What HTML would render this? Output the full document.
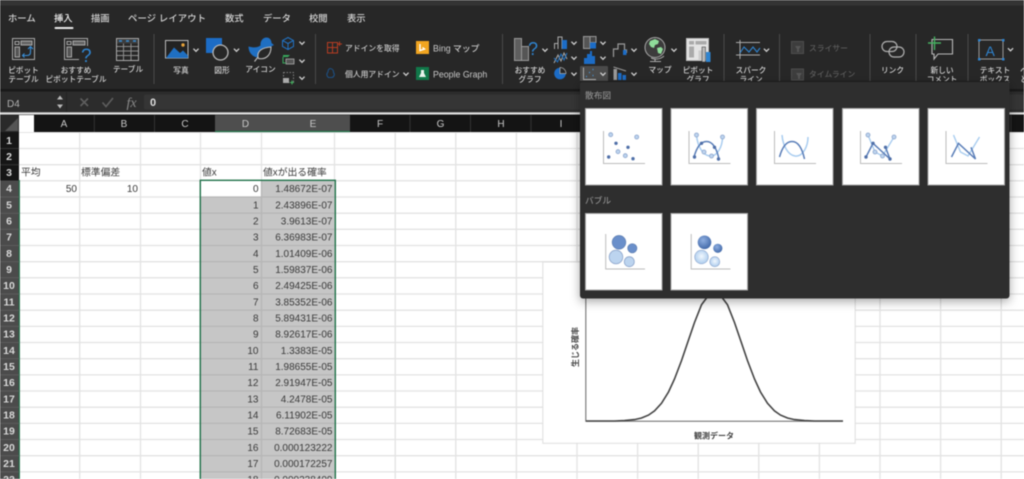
<!DOCTYPE html>
<html lang="ja">
<head>
<meta charset="utf-8">
<title>Excel</title>
<style>
html,body{margin:0;padding:0;width:1024px;height:479px;overflow:hidden;background:#fff}
svg{display:block;filter:blur(.4px)}
text{font-family:"Liberation Sans","Noto Sans CJK JP",sans-serif}
.tab{font-size:9.300px;fill:#d4d4d4;font-weight:500}
.rb{font-size:7.700px;fill:#d2d2d2;text-anchor:middle;font-weight:500}
.rl{font-size:7.800px;fill:#c8c8c8;font-weight:500}
.rle{font-size:8.800px;fill:#c8c8c8;font-weight:500}
.dim{font-size:7.800px;fill:#5c5c5c;font-weight:500}
.h{font-size:10px;fill:#c8c8c8;text-anchor:middle}
.rh{font-size:10.500px;fill:#d8d8d8;text-anchor:middle;font-weight:700}
.n{font-size:10px;fill:#3a3a3a;text-anchor:end}
.t{font-size:9.800px;fill:#3a3a3a}
.sec{font-size:8.700px;fill:#8b8b8b;font-weight:500}
.ax{font-size:8px;fill:#444;font-weight:700}
.g{stroke:#e3e3e3;stroke-width:1.300}
.ch{fill:none;stroke:#d0d0d0;stroke-width:1.300}
.sep{stroke:#4a4a4a;stroke-width:1}
.l{fill:#bcd3ee;stroke:#8ea6cc;stroke-width:.8}
.d{fill:#4f6fa8}
</style>
</head>
<body>
<svg width="1024" height="479" viewBox="0 0 1024 479" xmlns="http://www.w3.org/2000/svg">
<defs>
<path id="c" class="ch" d="M-2.600 -1.300 L0 1.300 L2.600 -1.300"/>
<path id="axes" d="M18.500 23 V55.500 H60" fill="none" stroke="#bdbdbd" stroke-width="1"/>
<path id="axesb" d="M20.700 21 V56 H60" fill="none" stroke="#bdbdbd" stroke-width="1"/>
<radialGradient id="gd" cx=".4" cy=".35" r=".7"><stop offset="0" stop-color="#8eaee0"/><stop offset="1" stop-color="#3f66a6"/></radialGradient>
<radialGradient id="gl" cx=".5" cy=".45" r=".6"><stop offset="0" stop-color="#f2f8fe"/><stop offset="1" stop-color="#a6c8ec"/></radialGradient>
<filter id="sh" x="-10%" y="-10%" width="120%" height="125%"><feDropShadow dx="0" dy="3" stdDeviation="5" flood-color="#000" flood-opacity=".35"/></filter>
</defs>

<!-- sheet -->
<rect x="0" y="132" width="1024" height="347" fill="#fff"/>
<g class="g">
<path d="M0 132.300H1024M0 148.500H1024M0 164.700H1024M0 180.800H1024M0 197H1024M0 213.200H1024M0 229.300H1024M0 245.500H1024M0 261.700H1024M0 277.800H1024M0 294H1024M0 310.200H1024M0 326.400H1024M0 342.500H1024M0 358.700H1024M0 374.900H1024M0 391H1024M0 407.200H1024M0 423.400H1024M0 439.500H1024M0 455.700H1024M0 471.900H1024"/>
<path d="M79.700 132V479M140.500 132V479M200.500 132V479M261.500 132V479M334.500 132V479M395.200 132V479M455.800 132V479M516.400 132V479M577 132V479M637.600 132V479M698.200 132V479M758.800 132V479M819.400 132V479M880 132V479M940.600 132V479M1001.200 132V479"/>
</g>

<!-- selection -->
<rect x="201" y="181" width="133.500" height="298" fill="#c6c6c6"/>
<rect x="201" y="181" width="60" height="15.500" fill="#fff"/>
<path d="M201 197H334.500M201 213.200H334.500M201 229.300H334.500M201 245.500H334.500M201 261.700H334.500M201 277.800H334.500M201 294H334.500M201 310.200H334.500M201 326.400H334.500M201 342.500H334.500M201 358.700H334.500M201 374.900H334.500M201 391H334.500M201 407.200H334.500M201 423.400H334.500M201 439.500H334.500M201 455.700H334.500M201 471.900H334.500" stroke="#b6b6b6" stroke-width="1.300"/>
<path d="M261.500 181V479" stroke="#b6b6b6" stroke-width="1.300"/>
<path d="M200.300 479V180.300H335.300V479" fill="none" stroke="#1f7048" stroke-width="1.400"/>

<!-- row headers -->
<rect x="0" y="132" width="19" height="48.500" fill="#161616"/>
<rect x="0" y="180.500" width="19" height="299" fill="#4b4b4b"/>
<path d="M19.300 180V479" stroke="#1f7048" stroke-width="1.200"/>
<path d="M0 148.500H19M0 164.700H19" stroke="#333"/>
<path d="M0 197H19M0 213.200H19M0 229.300H19M0 245.500H19M0 261.700H19M0 277.800H19M0 294H19M0 310.200H19M0 326.400H19M0 342.500H19M0 358.700H19M0 374.900H19M0 391H19M0 407.200H19M0 423.400H19M0 439.500H19M0 455.700H19M0 471.900H19" stroke="#5d5d5d"/>
<g>
<text class="rh" x="9" y="144">1</text><text class="rh" x="9" y="160">2</text><text class="rh" x="9" y="176">3</text>
<text class="rh" x="9" y="192">4</text><text class="rh" x="9" y="208.500">5</text><text class="rh" x="9" y="224.500">6</text>
<text class="rh" x="9" y="240.500">7</text><text class="rh" x="9" y="257">8</text><text class="rh" x="9" y="273">9</text>
<text class="rh" x="9" y="289">10</text><text class="rh" x="9" y="305.500">11</text><text class="rh" x="9" y="321.500">12</text>
<text class="rh" x="9" y="337.500">13</text><text class="rh" x="9" y="354">14</text><text class="rh" x="9" y="370">15</text>
<text class="rh" x="9" y="386">16</text><text class="rh" x="9" y="402.500">17</text><text class="rh" x="9" y="418.500">18</text>
<text class="rh" x="9" y="434.500">19</text><text class="rh" x="9" y="451">20</text><text class="rh" x="9" y="467">21</text>
<text class="rh" x="9" y="483">22</text>
</g>

<!-- cells -->
<text class="t" x="21" y="175.500">平均</text>
<text class="t" x="81" y="175.500">標準偏差</text>
<text class="t" x="202" y="175.500">値x</text>
<text class="t" x="263" y="175.500">値xが出る確率</text>
<text class="n" x="77" y="192">50</text>
<text class="n" x="138" y="192">10</text>
<g>
<text class="n" x="258.500" y="192">0</text><text class="n" x="332.500" y="192">1.48672E-07</text>
<text class="n" x="258.500" y="208.500">1</text><text class="n" x="332.500" y="208.500">2.43896E-07</text>
<text class="n" x="258.500" y="224.500">2</text><text class="n" x="332.500" y="224.500">3.9613E-07</text>
<text class="n" x="258.500" y="240.500">3</text><text class="n" x="332.500" y="240.500">6.36983E-07</text>
<text class="n" x="258.500" y="257">4</text><text class="n" x="332.500" y="257">1.01409E-06</text>
<text class="n" x="258.500" y="273">5</text><text class="n" x="332.500" y="273">1.59837E-06</text>
<text class="n" x="258.500" y="289">6</text><text class="n" x="332.500" y="289">2.49425E-06</text>
<text class="n" x="258.500" y="305.500">7</text><text class="n" x="332.500" y="305.500">3.85352E-06</text>
<text class="n" x="258.500" y="321.500">8</text><text class="n" x="332.500" y="321.500">5.89431E-06</text>
<text class="n" x="258.500" y="337.500">9</text><text class="n" x="332.500" y="337.500">8.92617E-06</text>
<text class="n" x="258.500" y="354">10</text><text class="n" x="332.500" y="354">1.3383E-05</text>
<text class="n" x="258.500" y="370">11</text><text class="n" x="332.500" y="370">1.98655E-05</text>
<text class="n" x="258.500" y="386">12</text><text class="n" x="332.500" y="386">2.91947E-05</text>
<text class="n" x="258.500" y="402.500">13</text><text class="n" x="332.500" y="402.500">4.2478E-05</text>
<text class="n" x="258.500" y="418.500">14</text><text class="n" x="332.500" y="418.500">6.11902E-05</text>
<text class="n" x="258.500" y="434.500">15</text><text class="n" x="332.500" y="434.500">8.72683E-05</text>
<text class="n" x="258.500" y="451">16</text><text class="n" x="332.500" y="451">0.000123222</text>
<text class="n" x="258.500" y="467">17</text><text class="n" x="332.500" y="467">0.000172257</text>
<text class="n" x="258.500" y="483">18</text><text class="n" x="332.500" y="483">0.000238409</text>
</g>

<!-- chart -->
<rect x="542.800" y="262" width="312.400" height="181.300" fill="#fff" stroke="#dedede" stroke-width="1"/>
<path d="M585.800 262V421.300H843" fill="none" stroke="#666" stroke-width="1"/>
<polyline fill="none" stroke="#444" stroke-width="1.600" points="586,421 614.500,421 624.500,420.600 634.500,419.600 641.500,418 648.500,415.100 654.500,410.900 661.500,403.300 668.500,392 674.500,379 681.500,360.600 688,341.500 694.500,322.500 701.500,304.800 708,296 714.500,290 721,296 727.500,304.800 734.500,322.500 741,341.500 747.500,360.600 754.500,379 760.500,392 767.500,403.300 774.500,410.900 780.500,415.100 787.500,418 794.500,419.600 804.500,420.600 814.500,421 843,421"/>
<text class="ax" x="714" y="438.500" text-anchor="middle">観測データ</text>
<text class="ax" transform="translate(578,347) rotate(-90)" text-anchor="middle">生じる確率</text>

<!-- column header -->
<rect x="0" y="114.500" width="1024" height="17.500" fill="#141414"/>
<rect x="19" y="115" width="15" height="17" fill="#fff"/>
<rect x="0" y="114.500" width="19" height="17.500" fill="#2a2a2a"/>
<path d="M5 131L18 118V131Z" fill="#555"/>
<rect x="215" y="115" width="135" height="17" fill="#4e4e4e"/>
<path d="M215 131.500H350" stroke="#1f7048" stroke-width="1.200"/>
<path d="M94.300 115V132M154.500 115V132M410 115V132M470.500 115V132M531 115V132M591 115V132M1011 115V132" stroke="#333"/>
<text class="h" x="64" y="127">A</text><text class="h" x="124" y="127">B</text><text class="h" x="185" y="127">C</text>
<text class="h" x="245.500" y="127">D</text><text class="h" x="313" y="127">E</text><text class="h" x="380" y="127">F</text>
<text class="h" x="440.500" y="127">G</text><text class="h" x="501" y="127">H</text><text class="h" x="561" y="127">I</text>

<!-- formula bar -->
<rect x="0" y="89" width="1024" height="25" fill="#2c2c2c"/>
<rect x="0" y="89" width="1024" height="2.500" fill="#191919"/>
<rect x="0" y="112.300" width="1024" height="1.800" fill="#dcdcdc"/>
<rect x="144" y="94.500" width="880" height="15" rx="2" fill="#353535"/>
<rect x="66" y="92" width="1" height="20" fill="#232323"/>
<text x="7" y="107" font-size="10" fill="#b0b0b0">D4</text>
<path d="M57 99.500L60 95.500L63 99.500ZM57 104.500L60 108.500L63 104.500Z" fill="#b8b8b8"/>
<path d="M80.500 98.500L88 106M88 98.500L80.500 106" stroke="#5e5e5e" stroke-width="1.600" fill="none"/>
<path d="M102.500 102.500L106 106.500L113 98" stroke="#5e5e5e" stroke-width="1.600" fill="none"/>
<text x="126.500" y="107" style="font-family:'Liberation Serif',serif" font-style="italic" font-size="14" fill="#8a8a8a">fx</text>
<text x="150" y="106" font-size="11" font-weight="700" fill="#dedede">0</text>

<!-- ribbon -->
<rect x="0" y="0" width="1024" height="89" fill="#272727"/>
<rect x="0" y="0" width="1024" height="5.500" fill="#343434"/>
<text class="tab" x="8" y="21.500">ホーム</text>
<text class="tab" x="54" y="21.500" style="fill:#f0f0f0">挿入</text>
<rect x="54.500" y="27" width="19" height="2" rx="1" fill="#e8e8e8"/>
<text class="tab" x="91" y="21.500">描画</text>
<text class="tab" x="128" y="21.500" textLength="78">ページ レイアウト</text>
<text class="tab" x="225" y="21.500">数式</text>
<text class="tab" x="263" y="21.500">データ</text>
<text class="tab" x="309" y="21.500">校閲</text>
<text class="tab" x="347" y="21.500">表示</text>

<path class="sep" d="M154 34V84M315.500 34V84M502.500 34V84M724 34V81M779.500 34V81M870 34V81M916 34V81M968 34V81"/>

<!-- pivot -->
<g fill="none" stroke="#a8a8a8" stroke-width="1">
<rect x="12.500" y="38.500" width="22" height="21"/><path d="M15 41.500h4v3h-4z"/><rect x="21" y="41" width="11" height="4" fill="#666"/><rect x="15" y="47" width="4.500" height="10" fill="#555"/>
<rect x="64.500" y="38.500" width="23" height="21"/><path d="M67 41.500h4v3h-4z"/><rect x="73" y="41" width="12" height="4" fill="#666"/><rect x="67" y="47" width="4.500" height="10" fill="#555"/>
</g>
<path d="M22.500 55.500h4.500q3.500 0 3.500-3.500v-5M28 49l2.500-2.500l2.500 2.500M24.500 53.500l-2 2l2 2" fill="none" stroke="#3a8fd8" stroke-width="1.100"/>
<rect x="79" y="46" width="11" height="16" fill="#272727"/>
<text x="81" y="62" font-size="19" fill="#2f84d0">?</text>
<text class="rb" x="23.500" y="73">ピボット</text><text class="rb" x="23.500" y="82">テーブル</text>
<text class="rb" x="76" y="73">おすすめ</text><text class="rb" x="76" y="82">ピボットテーブル</text>

<!-- table -->
<rect x="116.500" y="38.500" width="22" height="22" fill="none" stroke="#aaa"/>
<rect x="117" y="39" width="21" height="4.500" fill="#3d3d3d"/>
<path d="M117 46.500H138M117 51H138M117 55.500H138M123.500 43.500V60M131 43.500V60" stroke="#8e8e8e" fill="none"/>
<path d="M119 41h3M126 41h3M133 41h3" stroke="#3a8fd8" stroke-width="1.500"/>
<text class="rb" x="128" y="72">テーブル</text>

<!-- photo -->
<rect x="165.500" y="40.500" width="22.500" height="17.500" fill="#222" stroke="#bbb"/>
<path d="M166 58L174 47.500L180 53L183 50.500L188 55.500V58Z" fill="#1f6fc2"/>
<circle cx="183" cy="45" r="1.700" fill="#e8a33a"/>
<use href="#c" x="196" y="50"/>
<text class="rb" x="181" y="73">写真</text>

<!-- shape -->
<rect x="206" y="38" width="16" height="15" fill="#1c6cc6"/>
<circle cx="220.500" cy="52.500" r="7.500" fill="#272727" stroke="#b8b8b8" stroke-width="1.300"/>
<use href="#c" x="236.500" y="50"/>
<text class="rb" x="222" y="73">図形</text>

<!-- icons -->
<path d="M248.500 46.500C254 48 258 47.500 260.500 45.500C260 41 263 37.500 266.500 37.500C270 37.500 271.500 40.500 271.500 43L274 45L271 46.500C270 48 269 48.500 268 49.500C262 51 260 57 258 57.500C252 57 248.500 52 248.500 46.500Z" fill="#1f6fc2"/>
<path d="M254.500 61.500L258 57M258 57C257 51 262 47.500 271 47C271 54 267 60 258.500 58.500Z" fill="#272727" stroke="#bcbcbc" stroke-width="1.100"/>
<text class="rb" x="260.500" y="72">アイコン</text>

<path d="M288 37.500L293.500 40.500V46.500L288 49.500L282.500 46.500V40.500ZM282.500 40.500L288 43.500L293.500 40.500M288 43.500V49.500" fill="none" stroke="#2273c4" stroke-width="1"/>
<use href="#c" x="302" y="43"/>
<path d="M283 57h5l2-2h-7z" fill="#39a85c"/><rect x="286" y="59" width="8" height="5" fill="#555" stroke="#bbb" stroke-width=".7"/><path d="M283 57v6h3" stroke="#39a85c" fill="none"/>
<use href="#c" x="302" y="61"/>
<rect x="283.500" y="72.500" width="10" height="10" fill="none" stroke="#999" stroke-width=".8" stroke-dasharray="1.500 1.500"/>
<rect x="283" y="78" width="6" height="5" fill="#aaa"/><path d="M290 82.500h4M292 80.500v4" stroke="#45b060" stroke-width="1"/>
<use href="#c" x="302" y="78"/>

<!-- add-ins -->
<path d="M327.500 42.500H337.500V53H327.500ZM327.500 47.500H337.500M332.500 42.500V53M337.500 44H342M339.500 41.500V46" fill="none" stroke="#b53c22" stroke-width="1"/>
<text class="rl" x="345" y="51">アドインを取得</text>
<path d="M330 68.500a3.500 3.500 0 0 1 3.500 4a3 3 0 0 1-2 5h-3a3.500 3.500 0 0 1-.5-5.500a3.500 3.500 0 0 1 2-3.500z" fill="none" stroke="#1d4f82" stroke-width="1.100"/>
<text class="rl" x="345" y="77">個人用アドイン</text>
<use href="#c" x="406" y="74"/>
<rect x="416" y="41" width="13" height="13" fill="#f1a520"/>
<path d="M420 44v6.500l4.500-1.500-2-1.500" fill="none" stroke="#fff" stroke-width="1.400"/>
<text class="rle" x="433" y="51.500">Bing マップ</text>
<rect x="416" y="67" width="13" height="13" fill="#11784a"/>
<path d="M421 70h3v3l2 4h-7l2-4z" fill="#e8f3ec"/>
<text class="rle" x="433" y="77.500">People Graph</text>

<!-- charts -->
<rect x="514.500" y="38.500" width="7" height="22" fill="#5e5e5e" stroke="#999"/>
<rect x="521.500" y="46.500" width="7" height="14" fill="#555" stroke="#999"/>
<text x="528" y="55" font-size="18" fill="#2f84d0">?</text>
<use href="#c" x="545" y="50"/>
<text class="rb" x="530" y="73">おすすめ</text><text class="rb" x="530" y="82">グラフ</text>

<path d="M554.500 49V43.500H558V49M558 49V37H562V49" fill="none" stroke="#aaa"/><rect x="562" y="40" width="5" height="9" fill="#1c6cc6"/>
<use href="#c" x="574" y="43"/>
<path d="M554 63L558 55L561 61L564 53L567 59" fill="none" stroke="#aaa"/><path d="M554 58L557.500 62L561 54L564 60L567 53" fill="none" stroke="#2273c4"/>
<use href="#c" x="574" y="58"/>
<circle cx="560" cy="73.500" r="5.800" fill="#1c6cc6"/><path d="M560 73.500V67.500A6 6 0 0 1 566 73.500Z" fill="#272727" stroke="#aaa" stroke-width=".8"/>
<use href="#c" x="574" y="74"/>
<rect x="583.500" y="36.500" width="6.500" height="12" fill="#555" stroke="#999"/><rect x="590" y="36.500" width="6" height="6" fill="#444" stroke="#999"/><rect x="590" y="42.500" width="6" height="6" fill="#1c6cc6"/>
<use href="#c" x="603" y="43"/>
<path d="M584 64V58h3v6zM587 64V54h3v10zM590 64V51h2v13zM592 64V56h3v8z" fill="#1c6cc6"/>
<use href="#c" x="603" y="58"/>
<rect x="580" y="66" width="28" height="15.500" rx="1" fill="#4b4b4b"/>
<path d="M583.500 67.500V79.500H596" fill="none" stroke="#bbb" stroke-width=".9"/>
<path d="M586 76.500h1M589 72.500h1M592.500 69.500h1M592.500 75.500h1" stroke="#4a9ae0" stroke-width="1.200"/>
<use href="#c" x="603" y="74"/>
<path d="M613.500 57V49H618V44H624.500V50H626.500V53" fill="none" stroke="#9a9a9a" stroke-width="1.200"/><rect x="623" y="50" width="3.500" height="5" fill="#1c6cc6"/>
<use href="#c" x="634" y="50"/>
<path d="M613.500 67L626 71" fill="none" stroke="#999"/><rect x="613.500" y="69" width="3.500" height="11" fill="#999"/><rect x="618" y="73" width="3.500" height="7" fill="#1c6cc6"/><rect x="622.500" y="75" width="3.500" height="5" fill="#1c6cc6"/>
<use href="#c" x="634" y="74"/>

<circle cx="655" cy="47.500" r="10" fill="#3c3c3c" stroke="#aaa" stroke-width="1"/>
<path d="M650 41l5-2 4 2-1 3-3 1-1 3-3-1-2-3zM657 48l4-1 2 2-2 5-3-1z" fill="#8fdc9a"/>
<path d="M664 56a12 12 0 0 1-13 2M655 58.500V61M650 61.500H661" fill="none" stroke="#aaa"/>
<use href="#c" x="674" y="50"/>
<text class="rb" x="660" y="72.500">マップ</text>

<rect x="686.500" y="38.500" width="22" height="22" fill="#e4e4e4" stroke="#bbb"/>
<rect x="689" y="41" width="5" height="3.500" fill="#aaa"/><rect x="695.500" y="41" width="11" height="3.500" fill="#aaa"/><rect x="689" y="46.500" width="5" height="11" fill="#aaa"/>
<rect x="698.500" y="50.500" width="3.500" height="10" fill="#ccc"/><rect x="702" y="47" width="3.500" height="15" fill="#bbb" stroke="#272727" stroke-width=".5"/><rect x="706" y="52" width="4.500" height="10" fill="#2f84d0"/>
<text class="rb" x="698" y="73">ピボット</text><text class="rb" x="698" y="82">グラフ</text>

<path d="M736 42.500H760M736 55H760M740 40V59" stroke="#aaa" fill="none"/>
<path d="M740 53L744 47L749 52L753 47L757 52L760 48" stroke="#2f84d0" fill="none" stroke-width="1.100"/>
<use href="#c" x="766.500" y="50"/>
<text class="rb" x="751" y="73">スパーク</text><text class="rb" x="751" y="82">ライン</text>

<rect x="791.500" y="41.500" width="12" height="12" fill="#3d3d3d" stroke="#4d4d4d"/><path d="M795 46h6l-2 3v3h-2v-3z" fill="#555"/>
<text class="dim" x="809" y="51">スライサー</text>
<rect x="791.500" y="69" width="12" height="11" fill="#3d3d3d" stroke="#4d4d4d"/><path d="M796 73h6l-2 3v3h-2v-3z" fill="#555"/>
<text class="dim" x="809" y="77">タイムライン</text>

<g fill="none" stroke="#b0b0b0" stroke-width="1.200">
<rect x="882" y="41.500" width="15" height="10" rx="5"/>
<rect x="889" y="47" width="15" height="10" rx="5"/>
</g>
<text class="rb" x="892.500" y="73">リンク</text>

<path d="M932 39.500H952.500V54H938L934 59V54H932Z" fill="none" stroke="#b8b8b8" stroke-width="1.100"/>
<path d="M928 43H941M934.500 36.500V50" stroke="#45b060" stroke-width="1.400" fill="none"/>
<text class="rb" x="942" y="73">新しい</text><text class="rb" x="942" y="82">コメント</text>

<rect x="979" y="40" width="24" height="19" fill="none" stroke="#999"/>
<path d="M978 39h2.500v2.500H978zM1002 39h2.500v2.500H1002zM978 58h2.500v2.500H978zM1002 58h2.500v2.500H1002z" fill="#2f84d0"/>
<text x="985.500" y="56" font-size="14" fill="#2f84d0">A</text>
<use href="#c" x="1010.500" y="49.500"/>
<text class="rb" x="995" y="73">テキスト</text><text class="rb" x="995" y="82">ボックス</text>
<text class="rb" x="1024" y="73">ペ</text><text class="rb" x="1024" y="82">と</text>

<!-- popup -->
<rect x="580" y="81.500" width="429.500" height="217" rx="3" fill="#2d2d2d" filter="url(#sh)"/>
<path d="M580 81.500H1009.500" stroke="#1b1b1b"/>
<text class="sec" x="585" y="98.500">散布図</text>
<text class="sec" x="585" y="203.500">バブル</text>

<g transform="translate(585,108)"><rect x=".5" y=".5" width="76.500" height="76.500" fill="#fff" stroke="#a8a8a8"/><use href="#axes"/>
<circle class="l" cx="25.700" cy="26.700" r="2"/><circle class="l" cx="51.700" cy="29" r="2"/><circle class="l" cx="33" cy="43.700" r="2"/><circle class="l" cx="40.300" cy="47.700" r="2"/>
<circle class="d" cx="31" cy="35.300" r="1.700"/><circle class="d" cx="43" cy="39.300" r="1.700"/><circle class="d" cx="23.700" cy="49" r="1.700"/><circle class="d" cx="48" cy="50.700" r="1.700"/></g>

<g transform="translate(670.500,108)"><rect x=".5" y=".5" width="76.500" height="76.500" fill="#fff" stroke="#a8a8a8"/><use href="#axes"/>
<path d="M26 27C27 38 32 47 39 48C47 49 52 38 52 29" fill="none" stroke="#a9cdf0" stroke-width="1.500"/>
<path d="M23.500 49C26 40 30 33.500 36 33.500C43 33.500 46.500 42 48.500 51" fill="none" stroke="#5a7eb8" stroke-width="1.500"/>
<circle class="l" cx="26" cy="27" r="2"/><circle class="l" cx="52" cy="29" r="2"/><circle class="l" cx="33.500" cy="44" r="2"/><circle class="l" cx="41" cy="48" r="2"/>
<circle class="d" cx="31" cy="35.300" r="1.700"/><circle class="d" cx="44" cy="39.300" r="1.700"/><circle class="d" cx="24" cy="49" r="1.700"/><circle class="d" cx="48" cy="51" r="1.700"/></g>

<g transform="translate(756,108)"><rect x=".5" y=".5" width="76.500" height="76.500" fill="#fff" stroke="#a8a8a8"/><use href="#axes"/>
<path d="M26 27C27 38 32 47 39 48C47 49 52 38 52 29" fill="none" stroke="#a9cdf0" stroke-width="1.500"/>
<path d="M23.500 49C26 40 30 33.500 36 33.500C43 33.500 46.500 42 48.500 51" fill="none" stroke="#5a7eb8" stroke-width="1.500"/></g>

<g transform="translate(842,108)"><rect x=".5" y=".5" width="76.500" height="76.500" fill="#fff" stroke="#a8a8a8"/><use href="#axes"/>
<path d="M26 27L33 44L40.500 48L52 29" fill="none" stroke="#a9cdf0" stroke-width="1.400"/>
<path d="M24 49L31 35.300L48 51L43.500 39.300" fill="none" stroke="#5a7eb8" stroke-width="1.500"/>
<circle class="l" cx="26" cy="27" r="2"/><circle class="l" cx="52" cy="29" r="2"/><circle class="l" cx="33" cy="44" r="2"/><circle class="l" cx="40.500" cy="48" r="2"/>
<circle class="d" cx="31" cy="35.300" r="1.700"/><circle class="d" cx="43.500" cy="39.300" r="1.700"/><circle class="d" cx="24" cy="49" r="1.700"/><circle class="d" cx="48" cy="51" r="1.700"/></g>

<g transform="translate(927.500,108)"><rect x=".5" y=".5" width="76.500" height="76.500" fill="#fff" stroke="#a8a8a8"/><use href="#axes"/>
<path d="M26 27L33 44L40.500 48L52 29" fill="none" stroke="#a9cdf0" stroke-width="1.400"/>
<path d="M24 49L31 35.300L48 51L43.500 39.300" fill="none" stroke="#5a7eb8" stroke-width="1.500"/></g>

<g transform="translate(585,213)"><rect x=".5" y=".5" width="76.500" height="76.500" fill="#fff" stroke="#a8a8a8"/><use href="#axesb"/>
<circle cx="34" cy="29.300" r="6.800" fill="#6a8fca" stroke="#5f7fb2" stroke-width=".7"/><circle cx="47.300" cy="35.300" r="4.600" fill="#6a8fca" stroke="#5f7fb2" stroke-width=".7"/>
<circle cx="31" cy="44" r="6.800" fill="#bcd4ef" stroke="#8ea6cc" stroke-width=".8"/><circle cx="44.300" cy="48.700" r="5" fill="#bcd4ef" stroke="#8ea6cc" stroke-width=".8"/></g>

<g transform="translate(670.500,213)"><rect x=".5" y=".5" width="76.500" height="76.500" fill="#fff" stroke="#a8a8a8"/><use href="#axesb"/>
<circle cx="34" cy="29.300" r="6.800" fill="url(#gd)"/><circle cx="47.300" cy="35.300" r="4.600" fill="url(#gd)"/>
<circle cx="31" cy="44" r="6.800" fill="url(#gl)" stroke="#8ea6cc" stroke-width=".6"/><circle cx="44.300" cy="48.700" r="5" fill="url(#gl)" stroke="#8ea6cc" stroke-width=".6"/></g>
</svg>
</body>
</html>
